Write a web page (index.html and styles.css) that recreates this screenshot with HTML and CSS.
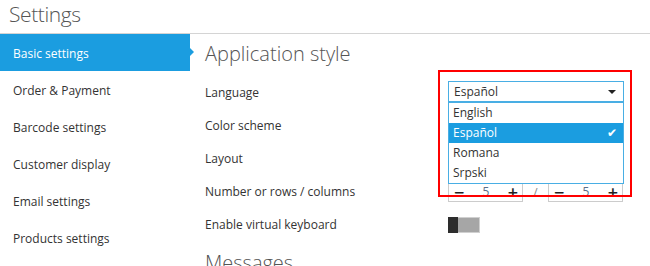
FILE: index.html
```html
<!DOCTYPE html>
<html lang="en">
<head>
    <meta charset="UTF-8">
    <meta name="viewport" content="width=device-width, initial-scale=1.0">
    <title>Settings</title>
    <link rel="stylesheet" href="styles.css">
</head>
<body>

    <header class="top">
        <h1>Settings</h1>
    </header>

    <div class="page">
        <nav class="side">
            <a class="side-item active">Basic settings</a>
            <a class="side-item">Order &amp; Payment</a>
            <a class="side-item">Barcode settings</a>
            <a class="side-item">Customer display</a>
            <a class="side-item">Email settings</a>
            <a class="side-item">Products settings</a>
        </nav>

        <main class="content">
            <h2 class="section">Application style</h2>

            <div class="row">
                <span class="label">Language</span>
                <div class="control">
                    <div class="select">
                        <span>Español</span>
                        <span class="caret"></span>
                        <ul class="options">
                            <li>English</li>
                            <li class="selected">Español <span class="check">✔</span></li>
                            <li>Romana</li>
                            <li>Srpski</li>
                        </ul>
                    </div>
                    <div class="highlight"></div>
                </div>
            </div>

            <div class="row">
                <span class="label">Color scheme</span>
            </div>

            <div class="row">
                <span class="label">Layout</span>
            </div>

            <div class="row">
                <span class="label">Number or rows / columns</span>
                <div class="control steppers">
                    <div class="stepper"><span class="op">−</span><span class="val">5</span><span class="op">+</span></div>
                    <span class="slash">/</span>
                    <div class="stepper"><span class="op">−</span><span class="val">5</span><span class="op">+</span></div>
                </div>
            </div>

            <div class="row">
                <span class="label">Enable virtual keyboard</span>
                <div class="control">
                    <div class="toggle"><span class="knob"></span></div>
                </div>
            </div>

            <h2 class="section last">Messages</h2>
        </main>
    </div>

</body>
</html>
```

FILE: styles.css
```css
* { box-sizing: border-box; }
body { margin: 0; font-family: "Open Sans", Arial, sans-serif; font-size: 12px; color: #333; background: #fff; overflow: hidden; height: 266px; }

.top { height: 34px; border-bottom: 1px solid #d4d4d4; }
.top h1 { margin: 0; padding: 0 0 0 9px; font-size: 21px; font-weight: 300; line-height: 28px; letter-spacing: -0.4px; color: #555; }

.page { display: flex; }

.side { width: 190px; display: flex; flex-direction: column; }
.side-item { display: flex; align-items: center; height: 37px; padding: 2px 0 0 13px; color: #333; position: relative; }
.side-item.active { background: #1b9de0; color: #fff; }
.side-item.active::after { content: ""; position: absolute; right: -4px; top: 14px; border-left: 4px solid #1b9de0; border-top: 4px solid transparent; border-bottom: 4px solid transparent; }

.content { flex: 1; padding-left: 15px; }
.section { margin: 0; height: 41px; font-size: 20px; font-weight: 300; color: #555; line-height: 40px; }
.section.last { height: 26px; line-height: 46px; }

.row { display: flex; align-items: center; height: 33px; padding-top: 2px; }
.label { width: 243px; }
.control { position: relative; }

.select { position: relative; width: 176px; height: 21px; margin-top: -2px; border: 1px solid #49aee4; display: flex; align-items: center; padding-left: 5px; font-size: 12px; }
.caret { position: absolute; right: 7px; top: 8px; border-top: 4px solid #222; border-left: 4px solid transparent; border-right: 4px solid transparent; }
.options { position: absolute; left: -1px; top: 20px; width: 176px; margin: 0; padding: 0; list-style: none; border: 1px solid #49aee4; background: #fff; z-index: 2; }
.options li { height: 20px; line-height: 20px; padding-left: 4px; position: relative; }
.options li.selected { background: #1b9de0; color: #fff; }
.check { position: absolute; right: 6px; top: 0; font-size: 12px; }

.highlight { position: absolute; left: -10px; top: -13px; width: 194px; height: 127px; border: 2px solid #f00; z-index: 3; }

.steppers { display: flex; align-items: center; margin-top: 1px; }
.stepper { width: 75px; height: 20px; border: 1px solid #ccc; border-top: none; display: flex; align-items: center; justify-content: space-between; padding: 0 4px 0 5px; }
.op { font-size: 18px; line-height: 18px; font-weight: 600; color: #222; }
.val { color: #5b6e87; }
.slash { width: 25px; text-align: center; color: #888; }

.toggle { width: 32px; height: 16px; border: 1px solid #d0d0d0; background: #a6a6a6; position: relative; }
.knob { position: absolute; left: -1px; top: -1px; width: 10px; height: 16px; background: #2d2d2d; }
```
